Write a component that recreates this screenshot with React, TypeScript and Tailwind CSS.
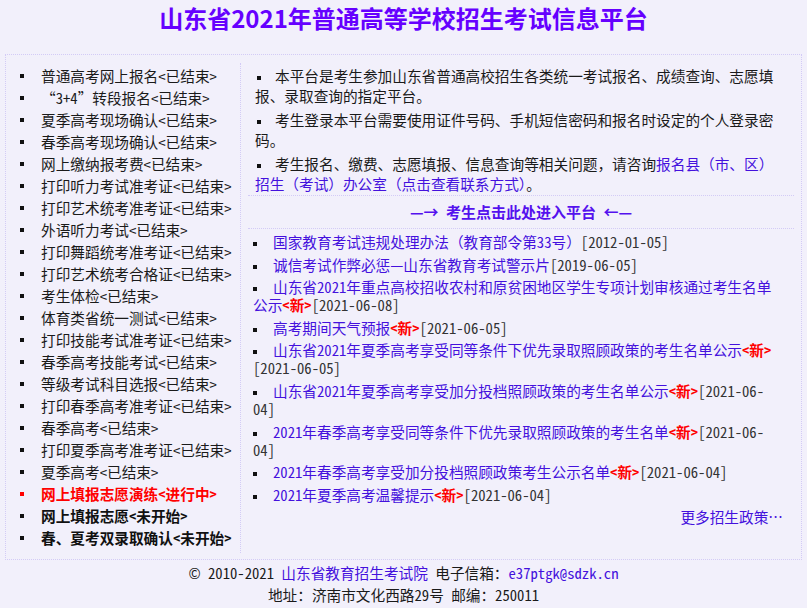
import { FC } from "react";

const FONT = "font-['Noto_Sans_Mono_CJK_SC','Noto_Sans_CJK_SC',sans-serif]";
const LINK = "text-[#4411dd]";

type Step = { name: string; status: string; variant?: "live" | "todo" };

const steps: Step[] = [
    { name: "普通高考网上报名", status: "<已结束>" },
    { name: "“3+4”转段报名", status: "<已结束>" },
    { name: "夏季高考现场确认", status: "<已结束>" },
    { name: "春季高考现场确认", status: "<已结束>" },
    { name: "网上缴纳报考费", status: "<已结束>" },
    { name: "打印听力考试准考证", status: "<已结束>" },
    { name: "打印艺术统考准考证", status: "<已结束>" },
    { name: "外语听力考试", status: "<已结束>" },
    { name: "打印舞蹈统考准考证", status: "<已结束>" },
    { name: "打印艺术统考合格证", status: "<已结束>" },
    { name: "考生体检", status: "<已结束>" },
    { name: "体育类省统一测试", status: "<已结束>" },
    { name: "打印技能考试准考证", status: "<已结束>" },
    { name: "春季高考技能考试", status: "<已结束>" },
    { name: "等级考试科目选报", status: "<已结束>" },
    { name: "打印春季高考准考证", status: "<已结束>" },
    { name: "春季高考", status: "<已结束>" },
    { name: "打印夏季高考准考证", status: "<已结束>" },
    { name: "夏季高考", status: "<已结束>" },
    { name: "网上填报志愿演练", status: "<进行中>", variant: "live" },
    { name: "网上填报志愿", status: "<未开始>", variant: "todo" },
    { name: "春、夏考双录取确认", status: "<未开始>", variant: "todo" },
];

type News = { title: string; isNew?: boolean; date: string };

const news: News[] = [
    { title: "国家教育考试违规处理办法（教育部令第33号）", date: "[2012-01-05]" },
    { title: "诚信考试作弊必惩—山东省教育考试警示片", date: "[2019-06-05]" },
    {
        title: "山东省2021年重点高校招收农村和原贫困地区学生专项计划审核通过考生名单公示",
        isNew: true,
        date: "[2021-06-08]",
    },
    { title: "高考期间天气预报", isNew: true, date: "[2021-06-05]" },
    {
        title: "山东省2021年夏季高考享受同等条件下优先录取照顾政策的考生名单公示",
        isNew: true,
        date: "[2021-06-05]",
    },
    {
        title: "山东省2021年夏季高考享受加分投档照顾政策的考生名单公示",
        isNew: true,
        date: "[2021-06-04]",
    },
    {
        title: "2021年春季高考享受同等条件下优先录取照顾政策的考生名单",
        isNew: true,
        date: "[2021-06-04]",
    },
    {
        title: "2021年春季高考享受加分投档照顾政策考生公示名单",
        isNew: true,
        date: "[2021-06-04]",
    },
    { title: "2021年夏季高考温馨提示", isNew: true, date: "[2021-06-04]" },
];

const Bullet: FC<{ red?: boolean }> = ({ red }) => (
    <span
        className={`inline-block h-[4px] w-[4px] align-middle ${red ? "bg-[#ff0000]" : "bg-[#111]"}`}
    />
);

const StepList: FC = () => (
    <ul className="mt-[8px] mb-[6px] w-[235px] shrink-0 border-r border-dotted border-[#d3cbf6] pt-[2px] pb-[4px]">
        {steps.map((step) => (
            <li
                key={step.name}
                className={`flex h-[22px] items-center pl-[14px] ${
                    step.variant === "live"
                        ? "font-bold text-[#ff0000]"
                        : step.variant === "todo"
                          ? "font-bold text-[#111]"
                          : "text-[#1a1a1a]"
                }`}
            >
                <Bullet red={step.variant === "live"} />
                <span className="ml-[17px] whitespace-nowrap">
                    {step.name}
                    {step.status}
                </span>
            </li>
        ))}
    </ul>
);

const Intro: FC = () => (
    <div className="border-b border-dotted border-[#d3cbf6] pt-[11px] pr-[10px] pl-[7px] text-[#1a1a1a]">
        <p className="mb-[4px] leading-[20px]">
            <span className="inline-block w-[20px] pl-[2px]">
                <Bullet />
            </span>
            本平台是考生参加山东省普通高校招生各类统一考试报名、成绩查询、志愿填报、录取查询的指定平台。
        </p>
        <p className="mb-[4px] leading-[20px]">
            <span className="inline-block w-[20px] pl-[2px]">
                <Bullet />
            </span>
            考生登录本平台需要使用证件号码、手机短信密码和报名时设定的个人登录密码。
        </p>
        <p className="mb-[1px] leading-[20px]">
            <span className="inline-block w-[20px] pl-[2px]">
                <Bullet />
            </span>
            考生报名、缴费、志愿填报、信息查询等相关问题，请咨询
            <span className={LINK}>报名县（市、区）招生（考试）办公室（点击查看联系方式）</span>。
        </p>
    </div>
);

const NewsList: FC = () => (
    <div className="pt-[4px] pr-[10px] pl-[5px]">
        <ul>
            {news.map((item) => (
                <li key={item.title} className="mb-[4.6px] leading-[18px]">
                    <span className="inline-block w-[20px]">
                        <Bullet />
                    </span>
                    <span className={LINK}>{item.title}</span>
                    {item.isNew && <span className="font-bold text-[#ff0000]">{"<新>"}</span>}
                    <span className="text-[#333]">{item.date}</span>
                </li>
            ))}
        </ul>
        <p className={`pr-[1px] text-right leading-[18px] ${LINK}`}>更多招生政策…</p>
    </div>
);

export default function App() {
    return (
        <div className={`min-h-[608px] bg-[#f2f0fb] text-[14.67px] ${FONT}`}>
            <h1 className="text-center font-['Noto_Sans_CJK_SC',sans-serif] text-[24px] leading-[35px] font-bold text-[#6600ff]">
                山东省2021年普通高等学校招生考试信息平台
            </h1>

            <div className="mx-[5px] mt-[19px] flex border border-dotted border-[#d3cbf6]">
                <StepList />
                <div className="flex-1 px-[7px]">
                    <Intro />
                    <div className="flex h-[33px] items-center justify-center border-b border-dotted border-[#d3cbf6] text-[15px] font-bold text-[#5511ee]">
                        —→ 考生点击此处进入平台 ←—
                    </div>
                    <NewsList />
                </div>
            </div>

            <footer className="pt-[2px] text-center leading-[22px] text-[#1a1a1a]">
                <p>
                    © 2010-2021 <span className={LINK}>山东省教育招生考试院</span> 电子信箱：
                    <span className={LINK}>e37ptgk@sdzk.cn</span>
                </p>
                <p>地址：济南市文化西路29号 邮编：250011</p>
            </footer>
        </div>
    );
}
